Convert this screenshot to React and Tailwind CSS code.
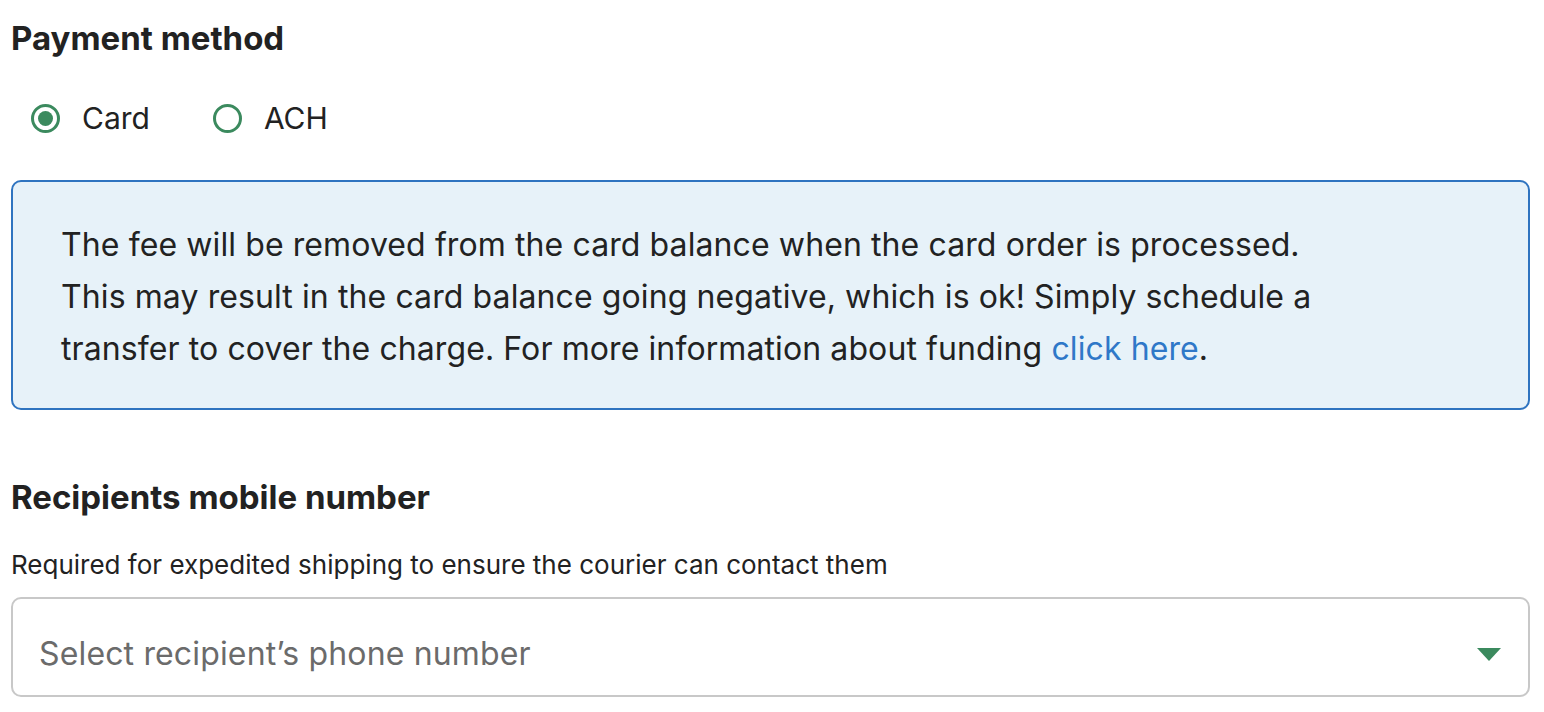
import { useState } from "react";

const font = { fontFamily: "Inter, 'Noto Sans', sans-serif" };

const Radio = ({ label, checked, onClick }) => (
  <button
    type="button"
    onClick={onClick}
    className="flex items-center gap-[22px] text-[30px] leading-[36px] text-[#222]"
  >
    <span className="flex h-[29px] w-[29px] items-center justify-center rounded-full border-[3px] border-[#3b8a5e]">
      {checked && <span className="h-[15px] w-[15px] rounded-full bg-[#3b8a5e]" />}
    </span>
    <span>{label}</span>
  </button>
);

export default function App() {
  const [method, setMethod] = useState("card");

  return (
    <div className="min-h-screen bg-white pl-[11px] pr-[14px] pt-[20px]" style={font}>
      <h2 className="text-[33px] font-bold leading-[36px] text-[#222]">Payment method</h2>

      <div className="mt-[44px] flex items-center gap-[63px] pl-[20px]">
        <Radio label="Card" checked={method === "card"} onClick={() => setMethod("card")} />
        <Radio label="ACH" checked={method === "ach"} onClick={() => setMethod("ach")} />
      </div>

      <div className="mt-[44px] rounded-[10px] border-2 border-[#2f74c0] bg-[#e7f2f9] px-[48px] pb-[33px] pt-[37px] text-[32px] leading-[52px] tracking-[0.1px] text-[#222]">
        <p>The fee will be removed from the card balance when the card order is processed.</p>
        <p>
          This may result in the card balance going negative, which is ok! Simply schedule a
          <br />
          transfer to cover the charge. For more information about funding{" "}
          <a href="#" className="text-[#2f78c8]">
            click here
          </a>
          .
        </p>
      </div>

      <h2 className="mt-[69px] text-[33px] font-bold leading-[36px] text-[#222]">
        Recipients mobile number
      </h2>
      <p className="mt-[35px] text-[26px] leading-[30px] text-[#222]">
        Required for expedited shipping to ensure the courier can contact them
      </p>

      <button
        type="button"
        className="mt-[17px] flex h-[100px] w-full items-center justify-between rounded-[10px] border-2 border-[#c8c8c8] bg-white pl-[26px] pr-[27px] pt-[14px]"
      >
        <span className="text-[32px] tracking-[0.15px] text-[#6b6b6b]">
          Select recipient’s phone number
        </span>
        <svg width="24" height="13" viewBox="0 0 24 13">
          <path d="M0 0h24L12 13z" fill="#3b8a5e" />
        </svg>
      </button>
    </div>
  );
}
